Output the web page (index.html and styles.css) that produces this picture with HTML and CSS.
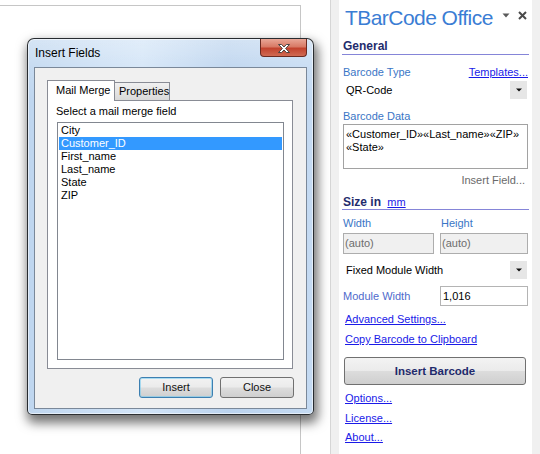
FILE: index.html
```html
<!DOCTYPE html>
<html lang="en">
<head>
<meta charset="utf-8">
<title>TBarCode Office</title>
<link rel="stylesheet" href="styles.css">
</head>
<body>
<div class="desktop">
  <div class="doc-area">
    <div class="doc-page"></div>

    <div class="dialog">
      <div class="titlebar">Insert Fields</div>
      <div class="close-x">
        <svg width="12" height="9" viewBox="0 0 12 9"><path d="M0.5 0.5H3.6L6 3L8.4 0.5H11.5L7.6 4.5L11.5 8.5H8.4L6 6L3.6 8.5H0.5L4.4 4.5Z" fill="#fff" stroke="#3a3a3a" stroke-width="0.9" stroke-linejoin="round"/></svg>
      </div>
      <div class="client">
        <div class="tabs">
          <div class="tab tab-active">Mail Merge</div>
          <div class="tab tab-idle">Properties</div>
        </div>
        <div class="tab-panel">
          <div class="panel-label">Select a mail merge field</div>
          <div class="listbox">
            <div class="item">City</div>
            <div class="item item-sel">Customer_ID</div>
            <div class="item">First_name</div>
            <div class="item">Last_name</div>
            <div class="item">State</div>
            <div class="item">ZIP</div>
          </div>
        </div>
        <div class="dlg-buttons">
          <div class="btn btn-focus">Insert</div>
          <div class="btn btn-close">Close</div>
        </div>
      </div>
    </div>
  </div>

  <div class="gutter"></div>

  <aside class="pane">
    <div class="pane-head">
      <div class="pane-title">TBarCode Office</div>
      <svg class="pane-menu" width="8" height="5" viewBox="0 0 8 5"><path d="M0.5 0.5H7.5L4 4.5Z" fill="#5a5a5a"/></svg>
      <svg class="pane-close" width="9" height="9" viewBox="0 0 9 9"><path d="M1 1L8 8M8 1L1 8" stroke="#4a4a4a" stroke-width="2"/></svg>
    </div>

    <div class="sec-head">General</div>

    <div class="row label-row first-label">
      <span class="label">Barcode Type</span>
      <span class="link">Templates...</span>
    </div>
    <div class="combo">
      <span>QR-Code</span>
      <span class="combo-btn"><svg width="6" height="4" viewBox="0 0 6 4"><path d="M0 0.5H6L3 3.5Z" fill="#111"/></svg></span>
    </div>

    <div class="row label-row gap10"><span class="label">Barcode Data</span></div>
    <div class="textbox">«Customer_ID»«Last_name»«ZIP»<br>«State»</div>

    <div class="insert-field">Insert Field...</div>

    <div class="sec-head sec-size">Size in <span class="link unit">mm</span></div>

    <div class="pair pair-labels">
      <span class="label">Width</span>
      <span class="label">Height</span>
    </div>
    <div class="pair pair-inputs">
      <div class="field field-off">(auto)</div>
      <div class="field field-off">(auto)</div>
    </div>

    <div class="combo combo2">
      <span>Fixed Module Width</span>
      <span class="combo-btn"><svg width="6" height="4" viewBox="0 0 6 4"><path d="M0 0.5H6L3 3.5Z" fill="#111"/></svg></span>
    </div>

    <div class="pair pair-module">
      <span class="label label-mod">Module Width</span>
      <div class="field">1,016</div>
    </div>

    <div class="pane-link adv">Advanced Settings...</div>
    <div class="pane-link copy">Copy Barcode to Clipboard</div>

    <div class="big-btn">Insert Barcode</div>

    <div class="pane-link l-options">Options...</div>
    <div class="pane-link l-license">License...</div>
    <div class="pane-link l-about">About...</div>
  </aside>

  <div class="edge"></div>
</div>
</body>
</html>
```

FILE: styles.css
```css
* { box-sizing: border-box; }
html, body { margin: 0; padding: 0; }
body {
  width: 540px;
  height: 454px;
  overflow: hidden;
  background: #fff;
  font-family: "Liberation Sans", Arial, sans-serif;
  font-size: 11px;
  color: #000;
}

.desktop { display: flex; height: 454px; }

/* ---------- document area ---------- */
.doc-area {
  position: relative;
  width: 331px;
  height: 454px;
  background: #fff;
  border-right: 1px solid #d6d6d6;
}
.doc-page {
  margin-top: 5px;
  width: 301px;
  height: 449px;
  border-top: 1px solid #c6c6c6;
  border-right: 1px solid #c6c6c6;
}
.gutter { width: 8px; background: #f0f0f0; }
.edge { width: 8px; background: #f0f0f0; }

/* ---------- dialog window ---------- */
.dialog {
  position: absolute;
  left: 27px;
  top: 38px;
  width: 287px;
  height: 377px;
  border: 1px solid rgba(0, 0, 0, 0.8);
  border-radius: 7px 7px 5px 5px;
  padding: 0 6px 5px;
  display: flex;
  flex-direction: column;
  background:
    linear-gradient(180deg, rgba(255,255,255,0.35) 0, rgba(255,255,255,0.12) 28px, rgba(255,255,255,0) 60px),
    linear-gradient(90deg, #bfd6ef 0, #d2e4f7 40%, #bbd3ee 70%, #c4daf2 100%);
  box-shadow: inset 0 0 0 1px rgba(255,255,255,0.55), 2px 6px 11px 2px rgba(0,0,0,0.55);
}
.titlebar {
  height: 28px;
  padding: 7px 0 0 1px;
  font-size: 12px;
  line-height: 14px;
  color: #000;
}
.close-x {
  position: absolute;
  left: 232px;
  top: 0;
  width: 47px;
  height: 18px;
  border: 1px solid #6b2a20;
  border-top: none;
  border-radius: 0 0 4px 4px;
  background: linear-gradient(180deg, #e9a797 0, #d87a66 45%, #c2432e 55%, #d06a53 100%);
  display: flex;
  align-items: center;
  justify-content: center;
}
.close-x svg { margin-top: 1px; }

.client {
  flex: 1;
  border: 1px solid #7a8899;
  background: #f0f0f0;
  padding: 12px 13px 0 12px;
  display: flex;
  flex-direction: column;
}
.tabs {
  display: flex;
  align-items: flex-end;
  height: 20px;
}
.tab {
  border: 1px solid #898c95;
  border-bottom: none;
  line-height: 13px;
}
.tab-active {
  width: 68px;
  height: 21px;
  margin-bottom: -1px;
  padding: 3px 0 0 8px;
  background: #fff;
  position: relative;
  z-index: 1;
}
.tab-idle {
  width: 56px;
  height: 18px;
  margin-left: -1px;
  padding: 2px 0 0 4px;
  background: linear-gradient(180deg, #f0f0f0 0, #e5e5e5 50%, #d9d9d9 100%);
}
.tab-panel {
  height: 269px;
  border: 1px solid #898c95;
  background: #fff;
  padding: 4px 8px 8px 9px;
  display: flex;
  flex-direction: column;
}
.panel-label {
  line-height: 13px;
  margin-left: -1px;
}
.listbox {
  flex: 1;
  margin-top: 4px;
  border: 1px solid #828790;
  background: #fff;
  padding: 1px;
}
.item {
  height: 13px;
  line-height: 13px;
  padding-left: 2px;
}
.item-sel { background: #3399ff; color: #fff; }

.dlg-buttons {
  display: flex;
  justify-content: flex-end;
  gap: 7px;
  margin-top: 8px;
  margin-right: -1px;
}
.btn {
  width: 74px;
  height: 21px;
  border: 1px solid #707070;
  border-radius: 3px;
  background: linear-gradient(180deg, #f2f2f2 0, #ebebeb 48%, #dddddd 52%, #cfcfcf 100%);
  text-align: center;
  line-height: 19px;
  color: #111;
}
.btn-focus {
  border-color: #3c7fb1;
  box-shadow: inset 0 0 0 1px rgba(110, 200, 240, 0.55);
}

/* ---------- task pane ---------- */
.pane {
  width: 193px;
  background: #fff;
  padding: 0 4px;
  display: flex;
  flex-direction: column;
}
.pane-head {
  height: 38px;
  display: flex;
  align-items: flex-start;
  padding-top: 5px;
}
.pane-title {
  flex: 1;
  padding-left: 2px;
  font-size: 21px;
  line-height: 26px;
  letter-spacing: -0.55px;
  color: #3a7dd4;
  white-space: nowrap;
}
.pane-menu { margin-top: 8px; margin-right: 8px; }
.pane-close { margin-top: 6px; margin-right: 1px; }

.sec-head {
  margin: 1px -1px 0;
  padding: 0 1px;
  height: 16px;
  line-height: 14px;
  font-size: 12px;
  font-weight: bold;
  color: #1f2c6c;
  border-bottom: 1px solid #8585d8;
}
.sec-size { margin-top: 8px; height: 15px; }
.unit { font-size: 11px; font-weight: normal; margin-left: 3px; }

.label-row {
  display: flex;
  justify-content: space-between;
  height: 13px;
  line-height: 13px;
}
.first-label { margin-top: 11px; }
.gap10 { margin-top: 10px; }
.label { color: #3a76c6; }
.label-mod { color: #4f6bcc; }
.link { color: #1a1ae8; text-decoration: underline; }

.combo {
  margin-top: 1px;
  height: 20px;
  display: flex;
  align-items: center;
  justify-content: space-between;
  padding-left: 3px;
}
.combo2 { margin-top: 6px; }
.combo-btn {
  width: 17px;
  height: 18px;
  margin-right: 1px;
  background: #e6e6e6;
  display: flex;
  align-items: center;
  justify-content: center;
}

.textbox {
  margin-top: 1px;
  height: 45px;
  border: 1px solid #a2a2a2;
  padding: 3px 2px;
  line-height: 13px;
}
.insert-field {
  margin-top: 5px;
  height: 13px;
  line-height: 13px;
  text-align: right;
  padding-right: 3px;
  color: #6a6a6a;
}

.pair {
  display: grid;
  grid-template-columns: 91px 88px;
  column-gap: 6px;
}
.pair-labels { margin-top: 7px; height: 13px; line-height: 13px; }
.pair-labels .label + .label { padding-left: 1px; }
.pair-inputs { margin-top: 3px; height: 21px; }
.field {
  height: 100%;
  border: 1px solid #b4b4b4;
  padding-left: 2px;
  line-height: 18px;
  background: #fff;
}
.field-off {
  background: #f0f0f0;
  border-color: #adadad;
  color: #6d6d6d;
  padding-left: 1px;
}
.pair-module {
  margin-top: 6px;
  height: 20px;
  align-items: center;
}

.pane-link {
  height: 13px;
  line-height: 13px;
  padding-left: 2px;
  color: #1a1ae8;
  text-decoration: underline;
}
.adv { margin-top: 7px; }
.copy { margin-top: 7px; }
.big-btn {
  margin: 11px 0 0 1px;
  width: 182px;
  height: 28px;
  border: 1px solid #707070;
  border-radius: 3px;
  background: linear-gradient(180deg, #f3f3f3 0, #ebebeb 48%, #dcdcdc 52%, #cfcfcf 100%);
  text-align: center;
  line-height: 26px;
  font-size: 11.5px;
  font-weight: bold;
  color: #1f2a6c;
}
.l-options { margin-top: 7px; }
.l-license { margin-top: 7px; }
.l-about { margin-top: 6px; }
```
